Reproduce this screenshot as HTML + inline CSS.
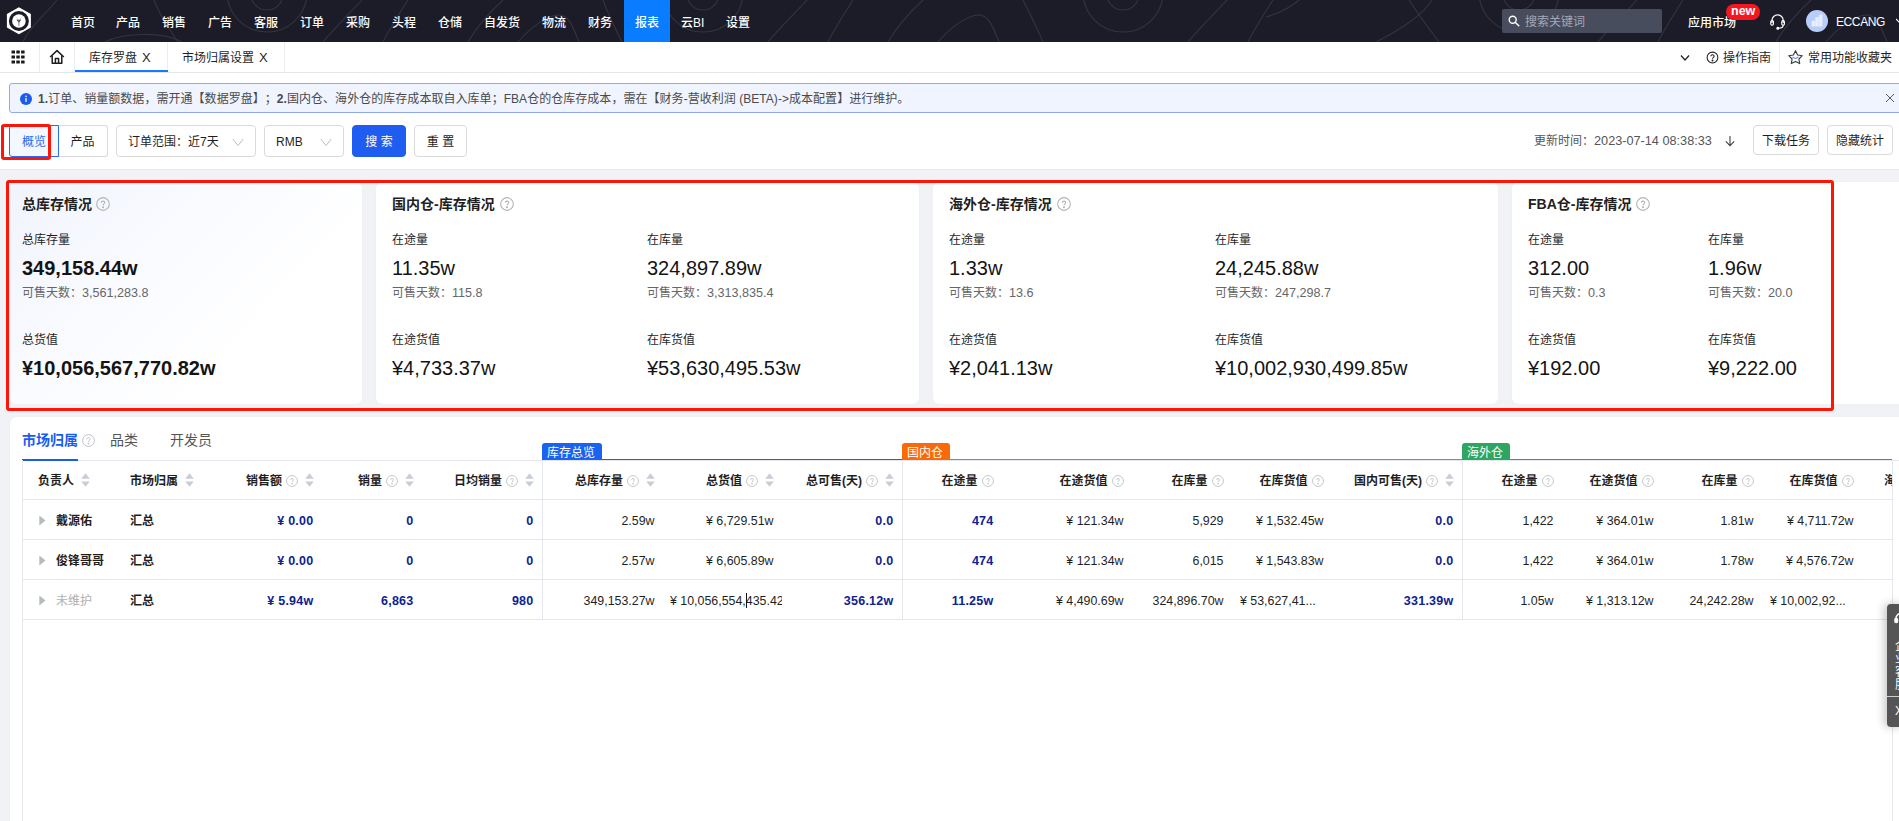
<!DOCTYPE html>
<html lang="zh-CN">
<head>
<meta charset="utf-8">
<title>库存罗盘</title>
<style>
*{box-sizing:border-box;margin:0;padding:0}
html,body{width:1899px;height:821px;overflow:hidden;background:#f0f2f5}
body{position:relative;font-family:"Liberation Sans","Noto Sans CJK SC",sans-serif;font-size:13px;color:#1f1f1f}
.abs{position:absolute}
.t{position:absolute;white-space:nowrap;line-height:1}
/* top nav */
#nav{position:absolute;left:0;top:0;width:1899px;height:42px;background:#1c1c28;overflow:hidden}
#nav .mi{position:absolute;top:0;height:42px;line-height:46px;color:#fff;font-size:12px;font-weight:500;white-space:nowrap}
#nav .act{position:absolute;left:624px;top:0;width:46px;height:42px;background:#0a7cff}
/* tab bar */
#tabs{position:absolute;left:0;top:42px;width:1899px;height:31px;background:#fff;border-bottom:1px solid #e4e7ed}
#tabs .sep{position:absolute;top:0;width:1px;height:30px;background:#ebedf0}
#tabs .tt{position:absolute;top:0;height:30px;line-height:33px;font-size:12px;color:#1f1f1f;white-space:nowrap}
/* white top area */
#topwhite{position:absolute;left:0;top:73px;width:1899px;height:97px;background:#fff;border-bottom:1px solid #e6e8eb}
#alert{position:absolute;left:9px;top:83px;width:1900px;height:30px;background:#f0f4ff;border:1px solid #8fa9f5;border-radius:3px}
#alert .tx{letter-spacing:.04px;position:absolute;left:28px;top:0;line-height:30px;text-spacing-trim:space-all;font-size:12px;color:#4a4a4a;white-space:nowrap}
.btn{position:absolute;top:125px;height:32px;border:1px solid #d9d9d9;border-radius:4px;background:#fff;font-size:12px;line-height:33px;text-align:center;color:#1f1f1f;white-space:nowrap}
</style>
</head>
<body>

<!-- ===== top navigation ===== -->
<div id="nav">
  <svg class="abs" style="left:0;top:0" width="1899" height="42" viewBox="0 0 1899 42" fill="none" stroke="#33343f" stroke-width="1.1">
    <path d="M57 0 C46 14 30 26 23 42"/>
    <path d="M154 0 C160 16 170 30 178 42"/>
    <path d="M105 42 C120 34 160 30 182 42"/>
    <circle cx="267" cy="-6" r="16"/><circle cx="267" cy="-8" r="40"/>
    <path d="M362 0 C349 14 333 30 323 42"/><path d="M408 0 C399 14 389 30 383 42"/>
    <path d="M503 0 C490 12 476 28 468 42"/><path d="M518 42 C530 28 548 14 560 15 C570 16 574 30 579 42"/>
    <path d="M603 0 C608 14 616 30 622 42"/>
    <circle cx="703" cy="-6" r="16"/><circle cx="703" cy="-8" r="40"/>
    <path d="M807 0 C794 14 778 30 768 42"/><path d="M853 0 C844 14 834 30 828 42"/>
    <path d="M923 0 C910 12 896 28 888 42"/><path d="M938 42 C950 28 968 14 980 15 C990 16 994 30 999 42"/>
    <path d="M1023 0 C1030 14 1038 30 1043 42"/>
    <circle cx="1123" cy="-6" r="16"/><circle cx="1123" cy="-8" r="40"/>
    <path d="M1227 0 C1214 14 1198 30 1188 42"/><path d="M1273 0 C1264 14 1254 30 1248 42"/>
    <path d="M1299 0 C1290 8 1276 14 1266 17"/>
    <path d="M1409 0 C1418 14 1430 30 1439 42"/>
    <path d="M1376 42 C1400 30 1424 14 1432 0"/>
    <circle cx="1519" cy="-6" r="16"/><circle cx="1519" cy="-8" r="40"/>
    <path d="M1637 0 C1624 14 1608 30 1598 42"/><path d="M1683 0 C1674 14 1664 30 1658 42"/>
    <path d="M1811 0 C1798 12 1784 28 1776 42"/><path d="M1826 42 C1838 28 1856 14 1868 15 C1878 16 1882 30 1887 42"/>
  </svg>
  <!-- logo -->
  <svg class="abs" style="left:5px;top:6px" width="30" height="30" viewBox="0 0 30 30">
    <path d="M13.9 1.2 L25.9 8 V21.4 L13.9 28.3 L1.9 21.4 V8 Z" fill="#fff"/>
    <circle cx="13.9" cy="15" r="10" fill="#1c1c28"/>
    <circle cx="13.9" cy="15" r="6.8" fill="#fff"/>
    <path d="M13.9 17 L11.6 13.4 H16.2 Z" fill="#1c1c28"/>
    <path d="M13.9 15 V20" stroke="#8a8a92" stroke-width="1" fill="none"/>
    <path d="M13.9 14.4 L10.6 10.4 M13.9 14.4 L17.2 10.4" stroke="#e2e2e6" stroke-width="1" fill="none"/>
  </svg>
  <div class="act"></div>
  <div class="mi" style="left:71px">首页</div>
  <div class="mi" style="left:116px">产品</div>
  <div class="mi" style="left:162px">销售</div>
  <div class="mi" style="left:208px">广告</div>
  <div class="mi" style="left:254px">客服</div>
  <div class="mi" style="left:300px">订单</div>
  <div class="mi" style="left:346px">采购</div>
  <div class="mi" style="left:392px">头程</div>
  <div class="mi" style="left:438px">仓储</div>
  <div class="mi" style="left:484px">自发货</div>
  <div class="mi" style="left:542px">物流</div>
  <div class="mi" style="left:588px">财务</div>
  <div class="mi" style="left:635px">报表</div>
  <div class="mi" style="left:681px">云BI</div>
  <div class="mi" style="left:726px">设置</div>
  <!-- search -->
  <div class="abs" style="left:1502px;top:9px;width:160px;height:24px;background:#484d5e;border-radius:2px"></div>
  <svg class="abs" style="left:1508px;top:15px" width="12" height="12" viewBox="0 0 12 12" fill="none" stroke="#fff" stroke-width="1.4"><circle cx="4.7" cy="4.7" r="3.5"/><path d="M7.4 7.4 L10.8 10.8" stroke-linecap="round"/></svg>
  <div class="t" style="left:1525px;top:16px;font-size:12px;color:#a3a8b6">搜索关键词</div>
  <div class="mi" style="left:1688px;font-size:12px">应用市场</div>
  <div class="abs" style="left:1726px;top:4px;width:34px;height:16px;border-radius:8px;background:#f5161f"></div>
  <div class="t" style="left:1731px;top:4px;font-size:12.5px;color:#fff;font-weight:bold;line-height:14px">new</div>
  <!-- headset -->
  <svg class="abs" style="left:1768px;top:12px" width="20" height="20" viewBox="0 0 20 20" fill="none" stroke="#fff" stroke-width="1.2">
    <path d="M4 11 V8.5 A5.6 5.6 0 0 1 15.2 8.5 V11"/>
    <rect x="2.8" y="8.6" width="2.6" height="4.6" rx="1.2"/>
    <rect x="13.8" y="8.6" width="2.6" height="4.6" rx="1.2"/>
    <path d="M15.2 13.2 C15.2 15.4 13 16.2 10.4 16.2"/>
    <circle cx="9.8" cy="16.2" r="0.9" fill="#fff"/>
  </svg>
  <!-- avatar -->
  <div class="abs" style="left:1806px;top:10px;width:22px;height:22px;border-radius:11px;background:#b9cdfb"></div>
  <svg class="abs" style="left:1806px;top:10px" width="22" height="22" viewBox="0 0 22 22"><path d="M5.6 16.6 V11 L9 10.4 V16.6 Z M9.3 16.6 V7.6 L12.8 6.8 V16.6 Z M13.1 16.6 V4.8 L16.4 4.2 V16.6 Z" fill="#eef3ff" opacity=".85"/></svg>
  <div class="mi" style="left:1836px;font-size:12px;letter-spacing:-0.4px;line-height:44px">ECCANG</div>
  <svg class="abs" style="left:1896px;top:18px" width="7" height="6" viewBox="0 0 7 6" fill="none" stroke="#fff" stroke-width="1.1"><path d="M0 1 L3.5 4.5 L7 1"/></svg>
</div>

<!-- ===== tab bar ===== -->
<div id="tabs">
  <svg class="abs" style="left:11px;top:8px" width="14" height="14" viewBox="0 0 14 14" fill="#1a1a1a">
    <rect x="0.5" y="0.4" width="3.5" height="3.2" rx=".3"/><rect x="5.3" y="0.4" width="3.5" height="3.2" rx=".3"/><rect x="10.1" y="0.4" width="3.5" height="3.2" rx=".3"/>
    <rect x="0.5" y="5.4" width="3.5" height="3.2" rx=".3"/><rect x="5.3" y="5.4" width="3.5" height="3.2" rx=".3"/><rect x="10.1" y="5.4" width="3.5" height="3.2" rx=".3"/>
    <rect x="0.5" y="10.4" width="3.5" height="3.2" rx=".3"/><rect x="5.3" y="10.4" width="3.5" height="3.2" rx=".3"/><rect x="10.1" y="10.4" width="3.5" height="3.2" rx=".3"/>
  </svg>
  <div class="sep" style="left:39px"></div>
  <svg class="abs" style="left:49px;top:7px" width="16" height="16" viewBox="0 0 16 16" fill="none" stroke="#1f1f1f" stroke-width="1.5" stroke-linejoin="round"><path d="M1.2 8 L8 1.6 L14.8 8"/><path d="M3.2 6.6 V14.2 H12.8 V6.6"/><path d="M6.4 14.2 V9.6 H9.6 V14.2"/></svg>
  <div class="sep" style="left:74px"></div>
  <div class="tt" style="left:89px">库存罗盘</div>
  <div class="tt" style="left:142px;font-size:13px;line-height:31px">X</div>
  <div class="abs" style="left:75px;top:28px;width:93px;height:2px;background:#1677ff;z-index:2"></div>
  <div class="sep" style="left:167px"></div>
  <div class="tt" style="left:182px">市场归属设置</div>
  <div class="tt" style="left:259px;font-size:13px;line-height:31px">X</div>
  <div class="sep" style="left:284px"></div>
  <svg class="abs" style="left:1680px;top:12px" width="10" height="8" viewBox="0 0 10 8" fill="none" stroke="#1f1f1f" stroke-width="1.2"><path d="M1 1.5 L5 6 L9 1.5"/></svg>
  <svg class="abs" style="left:1706px;top:9px" width="13" height="13" viewBox="0 0 14 14" fill="none" stroke="#1f1f1f" stroke-width="1.1"><circle cx="7" cy="7" r="5.8"/><path d="M5.2 5.6 C5.2 3.4 8.8 3.4 8.8 5.6 C8.8 6.8 7 6.9 7 8.4" /><circle cx="7" cy="10.2" r=".5" fill="#1f1f1f"/></svg>
  <div class="tt" style="left:1723px;font-size:12px">操作指南</div>
  <div class="sep" style="left:1779px"></div>
  <svg class="abs" style="left:1787px;top:7px" width="17" height="17" viewBox="0 0 17 17" fill="none" stroke="#3c3c3c" stroke-width="1.15" stroke-linejoin="round"><path d="M8.5 1.7 L10.6 6 L15.3 6.7 L11.9 10 L12.7 14.6 L8.5 12.4 L4.3 14.6 L5.1 10 L1.7 6.7 L6.4 6 Z"/><path d="M5.9 8.1 Q8.5 10.6 11.1 8.1" stroke="#5b8cff" stroke-width="1.1" stroke-linecap="round"/></svg>
  <div class="tt" style="left:1808px;font-size:12px">常用功能收藏夹</div>
</div>

<!-- ===== alert + filters ===== -->
<div id="topwhite"></div>
<div id="alert">
  <svg class="abs" style="left:10px;top:9px" width="12" height="12" viewBox="0 0 13 13"><circle cx="6.5" cy="6.5" r="6.5" fill="#1a5cf0"/><rect x="5.8" y="5.4" width="1.4" height="4.2" fill="#fff"/><circle cx="6.5" cy="3.6" r=".9" fill="#fff"/></svg>
  <div class="tx"><b>1.</b>订单、销量额数据，需开通【数据罗盘】；<b>2.</b>国内仓、海外仓的库存成本取自入库单；FBA仓的仓库存成本，需在【财务-营收利润 (BETA)-&gt;成本配置】进行维护。</div>
  <svg class="abs" style="left:1875px;top:9px" width="10" height="10" viewBox="0 0 10 10" fill="none" stroke="#5a5a5a" stroke-width="1"><path d="M1 1 L9 9 M9 1 L1 9"/></svg>
</div>

<div class="btn" style="left:58px;width:50px;border-radius:0 3px 3px 0;border-left:none">产品</div>
<div class="btn" style="left:9px;width:50px;border-radius:3px 0 0 3px;border-color:#2a6af5;color:#2a6af5;background:#f3f7ff">概览</div>
<div class="btn" style="left:116px;width:140px;text-align:left;padding-left:11px">订单范围：近7天</div>
<svg class="abs" style="left:232px;top:138px" width="12" height="9" viewBox="0 0 12 9" fill="none" stroke="#bcbcbc" stroke-width="1"><path d="M0.8 1 L6 7.6 L11.2 1"/></svg>
<div class="btn" style="left:264px;width:80px;text-align:left;padding-left:11px">RMB</div>
<svg class="abs" style="left:320px;top:138px" width="12" height="9" viewBox="0 0 12 9" fill="none" stroke="#bcbcbc" stroke-width="1"><path d="M0.8 1 L6 7.6 L11.2 1"/></svg>
<div class="btn" style="left:352px;width:54px;background:#1f5cf0;border-color:#1f5cf0;color:#fff">搜 索</div>
<div class="btn" style="left:414px;width:53px">重 置</div>
<div class="abs" style="left:1px;top:124px;width:50px;height:36px;border:3px solid #ff1408;border-radius:3px"></div>

<div class="t" style="left:1534px;top:135px;font-size:12px;color:#555">更新时间：<span style="font-size:12.7px">2023-07-14 08:38:33</span></div>
<svg class="abs" style="left:1724px;top:135px" width="12" height="12" viewBox="0 0 12 12" fill="none" stroke="#444" stroke-width="1.1"><path d="M6 1 V10.4 M1.8 6.4 L6 10.6 L10.2 6.4"/></svg>
<div class="btn" style="left:1753px;width:66px;height:30px;line-height:30px">下载任务</div>
<div class="btn" style="left:1827px;width:66px;height:30px;line-height:30px">隐藏统计</div>

<!-- ===== summary cards ===== -->
<style>
.card{position:absolute;top:182px;height:222px;background:#fff;border-radius:6px;box-shadow:0 0 1px rgba(0,0,0,.08)}
.card .ti{position:absolute;left:0;top:197px;font-size:14px;font-weight:bold;color:#1f1f1f;line-height:14px;white-space:nowrap}
.c-ti{position:absolute;top:197px;font-size:14px;font-weight:bold;color:#1f1f1f;line-height:14px;white-space:nowrap}
.c-lb{position:absolute;font-size:12px;color:#1f1f1f;line-height:12px;white-space:nowrap}
.c-v{position:absolute;font-size:20px;color:#141414;line-height:20px;white-space:nowrap}
.c-d{position:absolute;font-size:12px;color:#666;line-height:12px;white-space:nowrap}
.q{position:absolute;width:14px;height:14px}
.nm{font-size:12.6px}
.c-v{transform:scaleY(1.045);transform-origin:0 84.6%}
</style>
<div class="card" style="left:10px;width:352px;background:linear-gradient(135deg,#f1f4fd 0%,#fbfcff 45%,#ffffff 70%)"></div>
<div class="card" style="left:376px;width:543px"></div>
<div class="card" style="left:933px;width:565px"></div>
<div class="card" style="left:1512px;width:400px"></div>

<!-- card 1 -->
<div class="c-ti" style="left:22px">总库存情况</div>
<svg class="q" style="left:96px;top:197px" viewBox="0 0 13 13" fill="none" stroke="#b4b4b4" stroke-width="1"><circle cx="6.5" cy="6.5" r="5.9"/><path d="M4.9 5.3 C4.9 3.3 8.1 3.3 8.1 5.3 C8.1 6.4 6.5 6.5 6.5 7.8"/><circle cx="6.5" cy="9.5" r=".45" fill="#b4b4b4"/></svg>
<div class="c-lb" style="left:22px;top:234px">总库存量</div>
<div class="c-v" style="left:22px;top:258px;font-weight:bold">349,158.44w</div>
<div class="c-d" style="left:22px;top:287px">可售天数：<span class="nm">3,561,283.8</span></div>
<div class="c-lb" style="left:22px;top:334px">总货值</div>
<div class="c-v" style="left:22px;top:358px;font-weight:bold">¥10,056,567,770.82w</div>

<!-- card 2 -->
<div class="c-ti" style="left:392px">国内仓-库存情况</div>
<svg class="q" style="left:500px;top:197px" viewBox="0 0 13 13" fill="none" stroke="#b4b4b4" stroke-width="1"><circle cx="6.5" cy="6.5" r="5.9"/><path d="M4.9 5.3 C4.9 3.3 8.1 3.3 8.1 5.3 C8.1 6.4 6.5 6.5 6.5 7.8"/><circle cx="6.5" cy="9.5" r=".45" fill="#b4b4b4"/></svg>
<div class="c-lb" style="left:392px;top:234px">在途量</div>
<div class="c-v" style="left:392px;top:258px">11.35w</div>
<div class="c-d" style="left:392px;top:287px">可售天数：<span class="nm">115.8</span></div>
<div class="c-lb" style="left:392px;top:334px">在途货值</div>
<div class="c-v" style="left:392px;top:358px">¥4,733.37w</div>
<div class="c-lb" style="left:647px;top:234px">在库量</div>
<div class="c-v" style="left:647px;top:258px">324,897.89w</div>
<div class="c-d" style="left:647px;top:287px">可售天数：<span class="nm">3,313,835.4</span></div>
<div class="c-lb" style="left:647px;top:334px">在库货值</div>
<div class="c-v" style="left:647px;top:358px">¥53,630,495.53w</div>

<!-- card 3 -->
<div class="c-ti" style="left:949px">海外仓-库存情况</div>
<svg class="q" style="left:1057px;top:197px" viewBox="0 0 13 13" fill="none" stroke="#b4b4b4" stroke-width="1"><circle cx="6.5" cy="6.5" r="5.9"/><path d="M4.9 5.3 C4.9 3.3 8.1 3.3 8.1 5.3 C8.1 6.4 6.5 6.5 6.5 7.8"/><circle cx="6.5" cy="9.5" r=".45" fill="#b4b4b4"/></svg>
<div class="c-lb" style="left:949px;top:234px">在途量</div>
<div class="c-v" style="left:949px;top:258px">1.33w</div>
<div class="c-d" style="left:949px;top:287px">可售天数：<span class="nm">13.6</span></div>
<div class="c-lb" style="left:949px;top:334px">在途货值</div>
<div class="c-v" style="left:949px;top:358px">¥2,041.13w</div>
<div class="c-lb" style="left:1215px;top:234px">在库量</div>
<div class="c-v" style="left:1215px;top:258px">24,245.88w</div>
<div class="c-d" style="left:1215px;top:287px">可售天数：<span class="nm">247,298.7</span></div>
<div class="c-lb" style="left:1215px;top:334px">在库货值</div>
<div class="c-v" style="left:1215px;top:358px">¥10,002,930,499.85w</div>

<!-- card 4 -->
<div class="c-ti" style="left:1528px">FBA仓-库存情况</div>
<svg class="q" style="left:1636px;top:197px" viewBox="0 0 13 13" fill="none" stroke="#b4b4b4" stroke-width="1"><circle cx="6.5" cy="6.5" r="5.9"/><path d="M4.9 5.3 C4.9 3.3 8.1 3.3 8.1 5.3 C8.1 6.4 6.5 6.5 6.5 7.8"/><circle cx="6.5" cy="9.5" r=".45" fill="#b4b4b4"/></svg>
<div class="c-lb" style="left:1528px;top:234px">在途量</div>
<div class="c-v" style="left:1528px;top:258px">312.00</div>
<div class="c-d" style="left:1528px;top:287px">可售天数：<span class="nm">0.3</span></div>
<div class="c-lb" style="left:1528px;top:334px">在途货值</div>
<div class="c-v" style="left:1528px;top:358px">¥192.00</div>
<div class="c-lb" style="left:1708px;top:234px">在库量</div>
<div class="c-v" style="left:1708px;top:258px">1.96w</div>
<div class="c-d" style="left:1708px;top:287px">可售天数：<span class="nm">20.0</span></div>
<div class="c-lb" style="left:1708px;top:334px">在库货值</div>
<div class="c-v" style="left:1708px;top:358px">¥9,222.00</div>

<!-- red highlight frame -->
<div class="abs" style="left:6px;top:180px;width:1828px;height:231px;border:3px solid #ff1408;border-radius:3px"></div>

<!--CARDS_END-->

<!--TABLE-->
<!-- ===== bottom panel / table ===== -->
<style>
#panel{position:absolute;left:10px;top:417px;width:1900px;height:420px;background:#fff;border-radius:6px 0 0 0;box-shadow:0 0 1px rgba(0,0,0,.1)}
.th{position:absolute;top:474px;font-size:12px;font-weight:bold;color:#1f1f1f;line-height:14px;white-space:nowrap}
.td{position:absolute;font-size:12px;color:#1f1f1f;line-height:14px;white-space:nowrap}
.td.r{text-align:right}
.td.n{font-size:12.4px}
.td.b{font-weight:bold;color:#0e2292;font-size:12.5px;letter-spacing:.25px}
.td.k{font-weight:bold}
.hl{position:absolute;left:22px;width:1870px;height:1px;background:#e4e7ed}
.vl{position:absolute;top:460px;width:1px;background:#e4e7ed}
.tag{position:absolute;top:443px;height:17px;border-radius:3px 3px 0 0;color:#fff;font-size:12px;line-height:21px;padding-left:5px;white-space:nowrap;overflow:hidden}
</style>
<div id="panel"></div>
<div class="t" style="left:22px;top:433px;font-size:14px;font-weight:bold;color:#1a5cf0;line-height:14px">市场归属</div>
<div class="t" style="left:110px;top:433px;font-size:14px;color:#555;line-height:14px">品类</div>
<div class="t" style="left:170px;top:433px;font-size:14px;color:#555;line-height:14px">开发员</div>

<svg class="abs" style="left:82px;top:433.5px" width="13" height="13" viewBox="0 0 13 13" fill="none" stroke="#bfc3ca" stroke-width="1"><circle cx="6.5" cy="6.5" r="5.9"/><path d="M4.9 5.3 C4.9 3.3 8.1 3.3 8.1 5.3 C8.1 6.4 6.5 6.5 6.5 7.8"/><circle cx="6.5" cy="9.5" r=".45" fill="#bfc3ca"/></svg>
<div class="abs" style="left:22px;top:460px;width:1877px;height:1px;background:#e4e7ed"></div>
<div class="abs" style="left:22px;top:459px;width:56px;height:2px;background:#1a5cf0"></div>
<div class="hl" style="top:499px"></div>
<div class="hl" style="top:539px"></div>
<div class="hl" style="top:579px"></div>
<div class="hl" style="top:619px"></div>
<div class="vl" style="left:22px;height:361px"></div>
<div class="vl" style="left:1892px;height:361px"></div>
<div class="vl" style="left:542px;height:160px"></div>
<div class="vl" style="left:902px;height:160px"></div>
<div class="vl" style="left:1462px;height:160px"></div>
<div class="abs" style="left:542px;top:459px;width:360px;height:1px;background:#1a62f2"></div>
<div class="abs" style="left:902px;top:459px;width:560px;height:1px;background:#fa6a0a"></div>
<div class="abs" style="left:1462px;top:459px;width:430px;height:1px;background:#2fa562"></div>
<div class="tag" style="left:542px;width:60px;background:#1a62f2">库存总览</div>
<div class="tag" style="left:902px;width:48px;background:#fa6a0a">国内仓</div>
<div class="tag" style="left:1462px;width:48px;background:#2fa562">海外仓</div>
<div class="th" style="left:38px">负责人</div>
<svg class="abs" style="left:81px;top:473px" width="9" height="14" viewBox="0 0 9 14" fill="#c9cdd5"><path d="M4.5 0.3 L8.8 5.8 H0.2 Z"/><path d="M4.5 13.7 L8.8 8.6 H0.2 Z"/></svg>
<div class="th" style="left:130px">市场归属</div>
<svg class="abs" style="left:185px;top:473px" width="9" height="14" viewBox="0 0 9 14" fill="#c9cdd5"><path d="M4.5 0.3 L8.8 5.8 H0.2 Z"/><path d="M4.5 13.7 L8.8 8.6 H0.2 Z"/></svg>
<svg class="abs" style="left:305px;top:473px" width="9" height="14" viewBox="0 0 9 14" fill="#c9cdd5"><path d="M4.5 0.3 L8.8 5.8 H0.2 Z"/><path d="M4.5 13.7 L8.8 8.6 H0.2 Z"/></svg>
<svg class="abs" style="left:286px;top:474.5px" width="12" height="12" viewBox="0 0 13 13" fill="none" stroke="#bfc3ca" stroke-width="1"><circle cx="6.5" cy="6.5" r="5.9"/><path d="M4.9 5.3 C4.9 3.3 8.1 3.3 8.1 5.3 C8.1 6.4 6.5 6.5 6.5 7.8"/><circle cx="6.5" cy="9.5" r=".45" fill="#bfc3ca"/></svg>
<div class="th" style="right:1617px">销售额</div>
<svg class="abs" style="left:405px;top:473px" width="9" height="14" viewBox="0 0 9 14" fill="#c9cdd5"><path d="M4.5 0.3 L8.8 5.8 H0.2 Z"/><path d="M4.5 13.7 L8.8 8.6 H0.2 Z"/></svg>
<svg class="abs" style="left:386px;top:474.5px" width="12" height="12" viewBox="0 0 13 13" fill="none" stroke="#bfc3ca" stroke-width="1"><circle cx="6.5" cy="6.5" r="5.9"/><path d="M4.9 5.3 C4.9 3.3 8.1 3.3 8.1 5.3 C8.1 6.4 6.5 6.5 6.5 7.8"/><circle cx="6.5" cy="9.5" r=".45" fill="#bfc3ca"/></svg>
<div class="th" style="right:1517px">销量</div>
<svg class="abs" style="left:525px;top:473px" width="9" height="14" viewBox="0 0 9 14" fill="#c9cdd5"><path d="M4.5 0.3 L8.8 5.8 H0.2 Z"/><path d="M4.5 13.7 L8.8 8.6 H0.2 Z"/></svg>
<svg class="abs" style="left:506px;top:474.5px" width="12" height="12" viewBox="0 0 13 13" fill="none" stroke="#bfc3ca" stroke-width="1"><circle cx="6.5" cy="6.5" r="5.9"/><path d="M4.9 5.3 C4.9 3.3 8.1 3.3 8.1 5.3 C8.1 6.4 6.5 6.5 6.5 7.8"/><circle cx="6.5" cy="9.5" r=".45" fill="#bfc3ca"/></svg>
<div class="th" style="right:1397px">日均销量</div>
<svg class="abs" style="left:646px;top:473px" width="9" height="14" viewBox="0 0 9 14" fill="#c9cdd5"><path d="M4.5 0.3 L8.8 5.8 H0.2 Z"/><path d="M4.5 13.7 L8.8 8.6 H0.2 Z"/></svg>
<svg class="abs" style="left:627px;top:474.5px" width="12" height="12" viewBox="0 0 13 13" fill="none" stroke="#bfc3ca" stroke-width="1"><circle cx="6.5" cy="6.5" r="5.9"/><path d="M4.9 5.3 C4.9 3.3 8.1 3.3 8.1 5.3 C8.1 6.4 6.5 6.5 6.5 7.8"/><circle cx="6.5" cy="9.5" r=".45" fill="#bfc3ca"/></svg>
<div class="th" style="right:1276px">总库存量</div>
<svg class="abs" style="left:765px;top:473px" width="9" height="14" viewBox="0 0 9 14" fill="#c9cdd5"><path d="M4.5 0.3 L8.8 5.8 H0.2 Z"/><path d="M4.5 13.7 L8.8 8.6 H0.2 Z"/></svg>
<svg class="abs" style="left:746px;top:474.5px" width="12" height="12" viewBox="0 0 13 13" fill="none" stroke="#bfc3ca" stroke-width="1"><circle cx="6.5" cy="6.5" r="5.9"/><path d="M4.9 5.3 C4.9 3.3 8.1 3.3 8.1 5.3 C8.1 6.4 6.5 6.5 6.5 7.8"/><circle cx="6.5" cy="9.5" r=".45" fill="#bfc3ca"/></svg>
<div class="th" style="right:1157px">总货值</div>
<svg class="abs" style="left:885px;top:473px" width="9" height="14" viewBox="0 0 9 14" fill="#c9cdd5"><path d="M4.5 0.3 L8.8 5.8 H0.2 Z"/><path d="M4.5 13.7 L8.8 8.6 H0.2 Z"/></svg>
<svg class="abs" style="left:866px;top:474.5px" width="12" height="12" viewBox="0 0 13 13" fill="none" stroke="#bfc3ca" stroke-width="1"><circle cx="6.5" cy="6.5" r="5.9"/><path d="M4.9 5.3 C4.9 3.3 8.1 3.3 8.1 5.3 C8.1 6.4 6.5 6.5 6.5 7.8"/><circle cx="6.5" cy="9.5" r=".45" fill="#bfc3ca"/></svg>
<div class="th" style="right:1037px">总可售(天)</div>
<svg class="abs" style="left:981.5px;top:474.5px" width="12" height="12" viewBox="0 0 13 13" fill="none" stroke="#bfc3ca" stroke-width="1"><circle cx="6.5" cy="6.5" r="5.9"/><path d="M4.9 5.3 C4.9 3.3 8.1 3.3 8.1 5.3 C8.1 6.4 6.5 6.5 6.5 7.8"/><circle cx="6.5" cy="9.5" r=".45" fill="#bfc3ca"/></svg>
<div class="th" style="right:921.5px">在途量</div>
<svg class="abs" style="left:1111.5px;top:474.5px" width="12" height="12" viewBox="0 0 13 13" fill="none" stroke="#bfc3ca" stroke-width="1"><circle cx="6.5" cy="6.5" r="5.9"/><path d="M4.9 5.3 C4.9 3.3 8.1 3.3 8.1 5.3 C8.1 6.4 6.5 6.5 6.5 7.8"/><circle cx="6.5" cy="9.5" r=".45" fill="#bfc3ca"/></svg>
<div class="th" style="right:791.5px">在途货值</div>
<svg class="abs" style="left:1211.5px;top:474.5px" width="12" height="12" viewBox="0 0 13 13" fill="none" stroke="#bfc3ca" stroke-width="1"><circle cx="6.5" cy="6.5" r="5.9"/><path d="M4.9 5.3 C4.9 3.3 8.1 3.3 8.1 5.3 C8.1 6.4 6.5 6.5 6.5 7.8"/><circle cx="6.5" cy="9.5" r=".45" fill="#bfc3ca"/></svg>
<div class="th" style="right:691.5px">在库量</div>
<svg class="abs" style="left:1311.5px;top:474.5px" width="12" height="12" viewBox="0 0 13 13" fill="none" stroke="#bfc3ca" stroke-width="1"><circle cx="6.5" cy="6.5" r="5.9"/><path d="M4.9 5.3 C4.9 3.3 8.1 3.3 8.1 5.3 C8.1 6.4 6.5 6.5 6.5 7.8"/><circle cx="6.5" cy="9.5" r=".45" fill="#bfc3ca"/></svg>
<div class="th" style="right:591.5px">在库货值</div>
<svg class="abs" style="left:1445px;top:473px" width="9" height="14" viewBox="0 0 9 14" fill="#c9cdd5"><path d="M4.5 0.3 L8.8 5.8 H0.2 Z"/><path d="M4.5 13.7 L8.8 8.6 H0.2 Z"/></svg>
<svg class="abs" style="left:1426px;top:474.5px" width="12" height="12" viewBox="0 0 13 13" fill="none" stroke="#bfc3ca" stroke-width="1"><circle cx="6.5" cy="6.5" r="5.9"/><path d="M4.9 5.3 C4.9 3.3 8.1 3.3 8.1 5.3 C8.1 6.4 6.5 6.5 6.5 7.8"/><circle cx="6.5" cy="9.5" r=".45" fill="#bfc3ca"/></svg>
<div class="th" style="right:477px">国内可售(天)</div>
<svg class="abs" style="left:1541.5px;top:474.5px" width="12" height="12" viewBox="0 0 13 13" fill="none" stroke="#bfc3ca" stroke-width="1"><circle cx="6.5" cy="6.5" r="5.9"/><path d="M4.9 5.3 C4.9 3.3 8.1 3.3 8.1 5.3 C8.1 6.4 6.5 6.5 6.5 7.8"/><circle cx="6.5" cy="9.5" r=".45" fill="#bfc3ca"/></svg>
<div class="th" style="right:361.5px">在途量</div>
<svg class="abs" style="left:1641.5px;top:474.5px" width="12" height="12" viewBox="0 0 13 13" fill="none" stroke="#bfc3ca" stroke-width="1"><circle cx="6.5" cy="6.5" r="5.9"/><path d="M4.9 5.3 C4.9 3.3 8.1 3.3 8.1 5.3 C8.1 6.4 6.5 6.5 6.5 7.8"/><circle cx="6.5" cy="9.5" r=".45" fill="#bfc3ca"/></svg>
<div class="th" style="right:261.5px">在途货值</div>
<svg class="abs" style="left:1741.5px;top:474.5px" width="12" height="12" viewBox="0 0 13 13" fill="none" stroke="#bfc3ca" stroke-width="1"><circle cx="6.5" cy="6.5" r="5.9"/><path d="M4.9 5.3 C4.9 3.3 8.1 3.3 8.1 5.3 C8.1 6.4 6.5 6.5 6.5 7.8"/><circle cx="6.5" cy="9.5" r=".45" fill="#bfc3ca"/></svg>
<div class="th" style="right:161.5px">在库量</div>
<svg class="abs" style="left:1841.5px;top:474.5px" width="12" height="12" viewBox="0 0 13 13" fill="none" stroke="#bfc3ca" stroke-width="1"><circle cx="6.5" cy="6.5" r="5.9"/><path d="M4.9 5.3 C4.9 3.3 8.1 3.3 8.1 5.3 C8.1 6.4 6.5 6.5 6.5 7.8"/><circle cx="6.5" cy="9.5" r=".45" fill="#bfc3ca"/></svg>
<div class="th" style="right:61.5px">在库货值</div>
<div class="abs" style="left:1863px;top:461px;width:29px;height:38px;overflow:hidden"><div class="th" style="left:21px;top:13px">海外可售(天)</div></div>
<svg class="abs" style="left:39px;top:515px" width="7" height="11" viewBox="0 0 7 11"><path d="M0.3 0.5 L6.6 5.5 L0.3 10.5 Z" fill="#b4bcbc"/></svg>
<div class="td k" style="left:56px;top:513.5px">戴源佑</div>
<div class="td k" style="left:130px;top:513.5px">汇总</div>
<div class="td r n b" style="right:1585.5px;top:513.5px">¥ 0.00</div>
<div class="td r n b" style="right:1485.5px;top:513.5px">0</div>
<div class="td r n b" style="right:1365.5px;top:513.5px">0</div>
<div class="td r n" style="right:1244.5px;top:513.5px">2.59w</div>
<div class="td r n" style="right:1125.5px;top:513.5px">¥ 6,729.51w</div>
<div class="td r n b" style="right:1005.5px;top:513.5px">0.0</div>
<div class="td r n b" style="right:905.5px;top:513.5px">474</div>
<div class="td r n" style="right:775.5px;top:513.5px">¥ 121.34w</div>
<div class="td r n" style="right:675.5px;top:513.5px">5,929</div>
<div class="td r n" style="right:575.5px;top:513.5px">¥ 1,532.45w</div>
<div class="td r n b" style="right:445.5px;top:513.5px">0.0</div>
<div class="td r n" style="right:345.5px;top:513.5px">1,422</div>
<div class="td r n" style="right:245.5px;top:513.5px">¥ 364.01w</div>
<div class="td r n" style="right:145.5px;top:513.5px">1.81w</div>
<div class="td r n" style="right:45.5px;top:513.5px">¥ 4,711.72w</div>
<svg class="abs" style="left:39px;top:555px" width="7" height="11" viewBox="0 0 7 11"><path d="M0.3 0.5 L6.6 5.5 L0.3 10.5 Z" fill="#b4bcbc"/></svg>
<div class="td k" style="left:56px;top:553.5px">俊锋哥哥</div>
<div class="td k" style="left:130px;top:553.5px">汇总</div>
<div class="td r n b" style="right:1585.5px;top:553.5px">¥ 0.00</div>
<div class="td r n b" style="right:1485.5px;top:553.5px">0</div>
<div class="td r n b" style="right:1365.5px;top:553.5px">0</div>
<div class="td r n" style="right:1244.5px;top:553.5px">2.57w</div>
<div class="td r n" style="right:1125.5px;top:553.5px">¥ 6,605.89w</div>
<div class="td r n b" style="right:1005.5px;top:553.5px">0.0</div>
<div class="td r n b" style="right:905.5px;top:553.5px">474</div>
<div class="td r n" style="right:775.5px;top:553.5px">¥ 121.34w</div>
<div class="td r n" style="right:675.5px;top:553.5px">6,015</div>
<div class="td r n" style="right:575.5px;top:553.5px">¥ 1,543.83w</div>
<div class="td r n b" style="right:445.5px;top:553.5px">0.0</div>
<div class="td r n" style="right:345.5px;top:553.5px">1,422</div>
<div class="td r n" style="right:245.5px;top:553.5px">¥ 364.01w</div>
<div class="td r n" style="right:145.5px;top:553.5px">1.78w</div>
<div class="td r n" style="right:45.5px;top:553.5px">¥ 4,576.72w</div>
<svg class="abs" style="left:39px;top:595px" width="7" height="11" viewBox="0 0 7 11"><path d="M0.3 0.5 L6.6 5.5 L0.3 10.5 Z" fill="#b4bcbc"/></svg>
<div class="td" style="left:56px;top:593.5px;color:#b0b0b0">未维护</div>
<div class="td k" style="left:130px;top:593.5px">汇总</div>
<div class="td r n b" style="right:1585.5px;top:593.5px">¥ 5.94w</div>
<div class="td r n b" style="right:1485.5px;top:593.5px">6,863</div>
<div class="td r n b" style="right:1365.5px;top:593.5px">980</div>
<div class="td r n" style="right:1244.5px;top:593.5px">349,153.27w</div>
<div class="abs" style="left:670px;top:593.5px;width:112px;height:14px;overflow:hidden"><div class="td n" style="left:0;top:0">¥ 10,056,554,435.42</div></div>
<div class="td r n b" style="right:1005.5px;top:593.5px">356.12w</div>
<div class="td r n b" style="right:905.5px;top:593.5px">11.25w</div>
<div class="td r n" style="right:775.5px;top:593.5px">¥ 4,490.69w</div>
<div class="td r n" style="right:675.5px;top:593.5px">324,896.70w</div>
<div class="td n" style="left:1240px;top:593.5px">¥ 53,627,41...</div>
<div class="td r n b" style="right:445.5px;top:593.5px">331.39w</div>
<div class="td r n" style="right:345.5px;top:593.5px">1.05w</div>
<div class="td r n" style="right:245.5px;top:593.5px">¥ 1,313.12w</div>
<div class="td r n" style="right:145.5px;top:593.5px">24,242.28w</div>
<div class="td n" style="left:1770px;top:593.5px">¥ 10,002,92...</div>
<div class="abs" style="left:746px;top:593px;width:1px;height:15px;background:#111"></div>
<div class="abs" style="left:1887px;top:604px;width:20px;height:123px;background:#555;border-radius:4px 0 0 4px;box-shadow:-3px 0 8px rgba(0,0,0,.22)"></div>
<div class="abs" style="left:1887px;top:696px;width:12px;height:1px;background:#d0d0d0"></div>
<svg class="abs" style="left:1894px;top:612px" width="14" height="14" viewBox="0 0 14 14" fill="none" stroke="#fff" stroke-width="1.6"><path d="M2 9 V6.5 A5 5 0 0 1 12 6.5 V9"/><rect x="1" y="6.5" width="2.4" height="4" rx="1" fill="#fff"/></svg>
<div class="abs" style="left:1895px;top:640px;width:12px;font-size:12px;line-height:13px;color:#fff">企业客服</div>
<div class="abs" style="left:1895px;top:705px;font-size:12px;line-height:12px;color:#fff">X</div>
<!--TABLE_END-->

</body>
</html>
